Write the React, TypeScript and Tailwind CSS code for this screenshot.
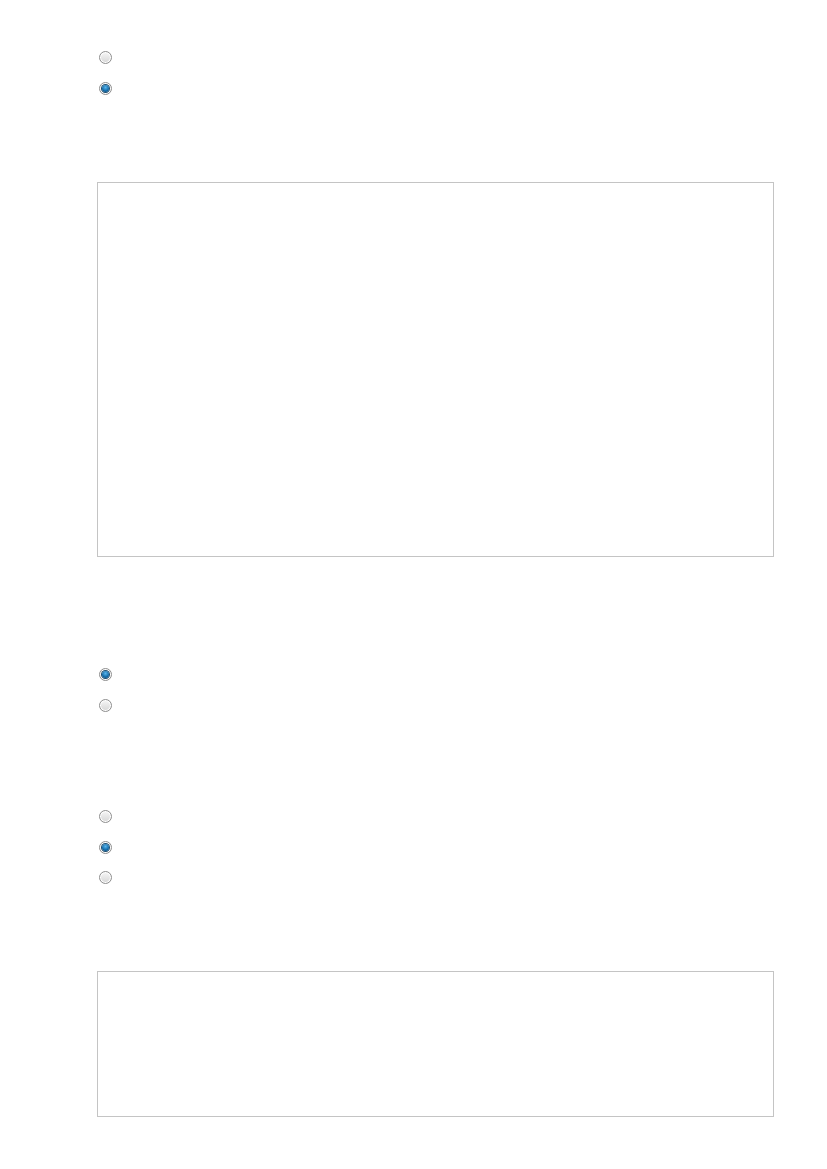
import React from "react";

function Radio({ checked }: { checked?: boolean }) {
  return (
    <div className="w-[13px] h-[13px] rounded-full border border-[#8e8e8e] bg-[linear-gradient(180deg,#f7f7f7,#d6d6d6)] flex items-center justify-center shadow-[inset_0_0_0_1px_#ffffff]">
      {checked ? (
        <div className="w-[7px] h-[7px] rounded-full bg-[radial-gradient(circle_at_50%_35%,#5ab6ec,#0b64a3_65%,#063f6b)] shadow-[0_0_0_1px_#1f4f70]" />
      ) : null}
    </div>
  );
}

export default function App() {
  return (
    <div className="w-[827px] h-[1169px] bg-white font-['Liberation_Sans',sans-serif]">
      <div className="flex flex-col">
        <div className="pt-[51px] pl-[99px]">
          <div className="flex flex-col gap-[18px]">
            <Radio />
            <Radio checked />
          </div>
        </div>
        <div className="mt-[87px] ml-[97px] w-[677px] h-[375px] border border-[#c4c4c4]" />
        <div className="mt-[111px] pl-[99px]">
          <div className="flex flex-col gap-[18px]">
            <Radio checked />
            <Radio />
          </div>
        </div>
        <div className="mt-[98px] pl-[99px]">
          <div className="flex flex-col gap-[17.5px]">
            <Radio />
            <Radio checked />
            <Radio />
          </div>
        </div>
        <div className="mt-[87px] ml-[97px] w-[677px] h-[146px] border border-[#c4c4c4]" />
      </div>
    </div>
  );
}
